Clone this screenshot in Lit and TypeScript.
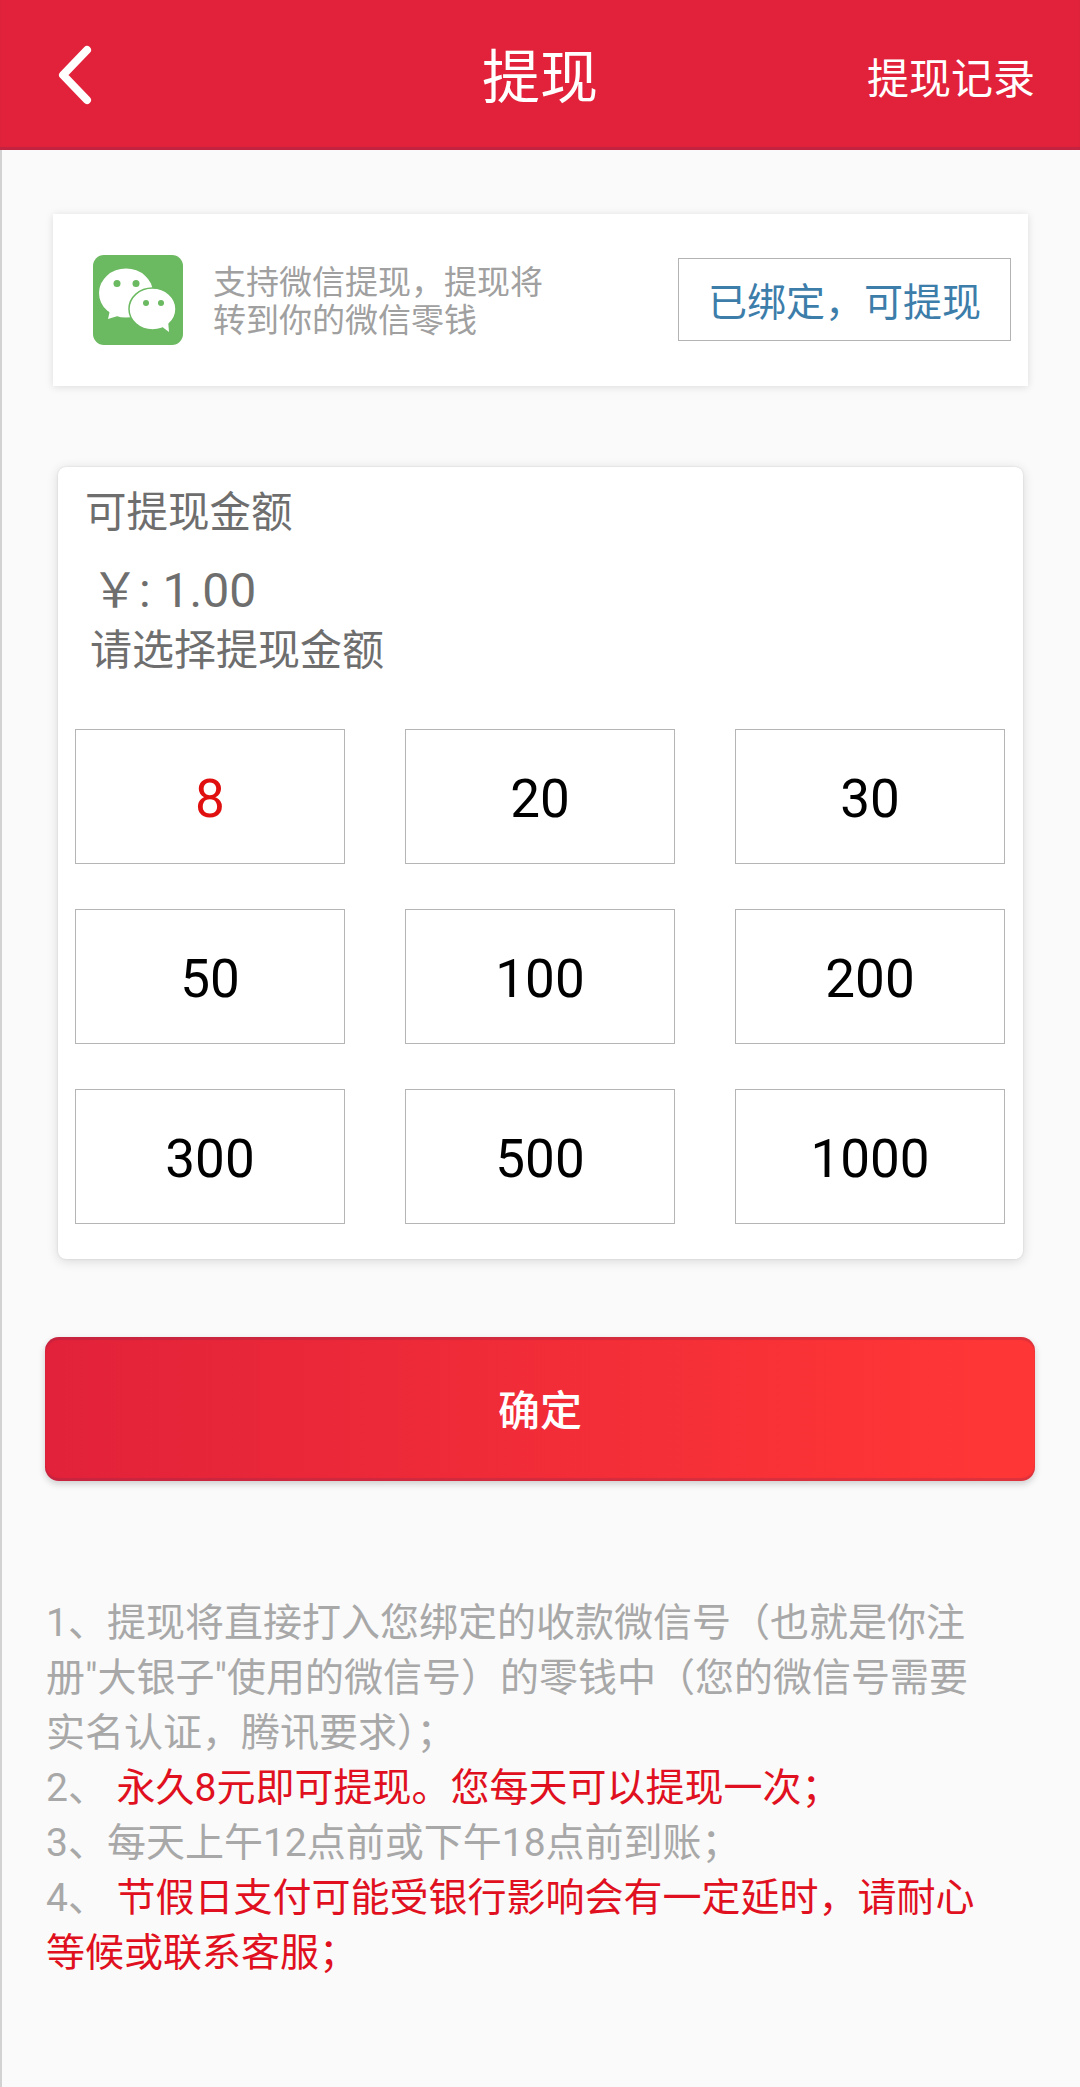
import { LitElement, html, css, svg } from 'lit';
import { customElement, state } from 'lit/decorators.js';

const AMOUNTS = [8, 20, 30, 50, 100, 200, 300, 500, 1000];

const wechatIcon = svg`
  <rect x="0" y="0" width="90" height="90" rx="11" fill="#6bb960"/>
  <ellipse cx="33" cy="38" rx="27" ry="24.500" fill="#fff"/>
  <path fill="#fff" d="M17 55 L15 64 L28 60 Z"/>
  <ellipse cx="59.500" cy="54" rx="23.500" ry="21" fill="#fff" stroke="#6bb960" stroke-width="1.500"/>
  <path fill="#fff" d="M68 71 L76 77 L75 65 Z"/>
  <circle cx="24" cy="28.500" r="3.500" fill="#6bb960"/>
  <circle cx="43" cy="28.500" r="3.500" fill="#6bb960"/>
  <circle cx="53" cy="48" r="3" fill="#6bb960"/>
  <circle cx="68" cy="48" r="3" fill="#6bb960"/>
`;

@customElement('app-root')
export class AppRoot extends LitElement {
  @state() selected = 8;

  static styles = css`
    :host {
      display: block;
      min-height: 2087px;
      background: #fafafa;
      font-family: Roboto, "Noto Sans CJK SC", sans-serif;
      color: #6e6e6e;
    }
    .bar {
      height: 150px;
      background: #e2223a;
      box-shadow: inset 0 -3px 1px rgba(120, 40, 80, 0.3);
      color: #fff;
      display: grid;
      grid-template-columns: 1fr auto 1fr;
      align-items: center;
      padding: 0 45px;
      box-sizing: border-box;
    }
    .back {
      display: block;
      width: 36px;
      height: 60px;
      margin-left: 12px;
    }
    .title {
      font-size: 58px;
      line-height: 1;
      padding-top: 5px;
    }
    .history {
      font-size: 42px;
      justify-self: end;
    }
    .main {
      border-left: 2px solid #d2d2d2;
      padding-top: 64px;
      height: 1937px;
      box-sizing: border-box;
    }
    .bind {
      margin-left: 51px;
      width: 975px;
      height: 172px;
      box-sizing: border-box;
      background: #fff;
      box-shadow: 0 1px 8px rgba(0, 0, 0, 0.12);
      display: flex;
      align-items: center;
      padding: 0 17px 0 40px;
    }
    .bind svg {
      width: 90px;
      height: 90px;
      flex: none;
    }
    .bind-text {
      margin-left: 30px;
      padding-top: 4px;
      font-size: 33px;
      line-height: 38px;
      color: #a0a0a0;
      flex: 1;
    }
    .bound {
      width: 333px;
      height: 83px;
      margin-top: -2px;
      box-sizing: border-box;
      border: 1px solid #b4b4b4;
      color: #3c7daa;
      font-size: 39px;
      display: flex;
      align-items: center;
      justify-content: center;
    }
    .amounts {
      margin: 81px 0 0 56px;
      width: 965px;
      height: 792px;
      box-sizing: border-box;
      background: #fff;
      border-radius: 8px;
      box-shadow: 0 2px 12px rgba(0, 0, 0, 0.14), 0 0 2px rgba(0, 0, 0, 0.12);
      padding: 18px 17px 0;
    }
    .label {
      font-size: 41.500px;
      line-height: 56px;
      padding-left: 10px;
    }
    .balance {
      font-size: 48px;
      line-height: 60px;
      margin-top: 20px;
      padding-left: 16px;
    }
    .pick {
      font-size: 42px;
      line-height: 60px;
      padding-left: 15px;
    }
    .grid {
      display: grid;
      grid-template-columns: repeat(3, 270px);
      grid-auto-rows: 135px;
      column-gap: 60px;
      row-gap: 45px;
      margin-top: 48px;
    }
    .cell {
      border: 1px solid #b5b5b5;
      box-sizing: border-box;
      display: flex;
      align-items: center;
      justify-content: center;
      padding-top: 4px;
      font-size: 53px;
      color: #000;
    }
    .cell.on {
      color: #e01010;
    }
    .confirm {
      margin: 78px 0 0 43px;
      width: 990px;
      height: 144px;
      padding-bottom: 4px;
      box-sizing: border-box;
      border-radius: 14px;
      background: linear-gradient(to right, #e2223a, #ff3636 95%);
      box-shadow: 0 3px 7px rgba(0, 0, 0, 0.18), inset 0 3px 1px rgba(120, 40, 80, 0.25), inset 0 -3px 1px rgba(120, 40, 80, 0.25);
      color: #fff;
      font-size: 42px;
      font-weight: 500;
      display: flex;
      align-items: center;
      justify-content: center;
    }
    .notes {
      margin: 115px 0 0 44px;
      width: 1010px;
      font-size: 39px;
      line-height: 55px;
      color: #a8a8a8;
    }
    .red {
      color: #e01020;
    }
  `;

  render() {
    return html`
      <div class="bar">
        <svg class="back" viewBox="0 0 36 60">
          <path d="M30 5 L6 30 L30 55" fill="none" stroke="#fff" stroke-width="8" stroke-linecap="round" stroke-linejoin="round"/>
        </svg>
        <div class="title">提现</div>
        <div class="history">提现记录</div>
      </div>
      <div class="main">
        <div class="bind">
          <svg viewBox="0 0 90 90">${wechatIcon}</svg>
          <div class="bind-text">支持微信提现，提现将<br />转到你的微信零钱</div>
          <div class="bound">已绑定，可提现</div>
        </div>
        <div class="amounts">
          <div class="label">可提现金额</div>
          <div class="balance">￥: 1.00</div>
          <div class="pick">请选择提现金额</div>
          <div class="grid">
            ${AMOUNTS.map(
              (a) => html`<div class="cell ${a === this.selected ? 'on' : ''}" @click=${() => (this.selected = a)}>${a}</div>`
            )}
          </div>
        </div>
        <div class="confirm">确定</div>
        <div class="notes">
          <div>1、提现将直接打入您绑定的收款微信号（也就是你注<br />册"大银子"使用的微信号）的零钱中（您的微信号需要<br />实名认证，腾讯要求）；</div>
          <div>2、 <span class="red">永久8元即可提现。您每天可以提现一次；</span></div>
          <div>3、每天上午12点前或下午18点前到账；</div>
          <div>4、 <span class="red">节假日支付可能受银行影响会有一定延时，请耐心<br />等候或联系客服；</span></div>
        </div>
      </div>
    `;
  }
}
